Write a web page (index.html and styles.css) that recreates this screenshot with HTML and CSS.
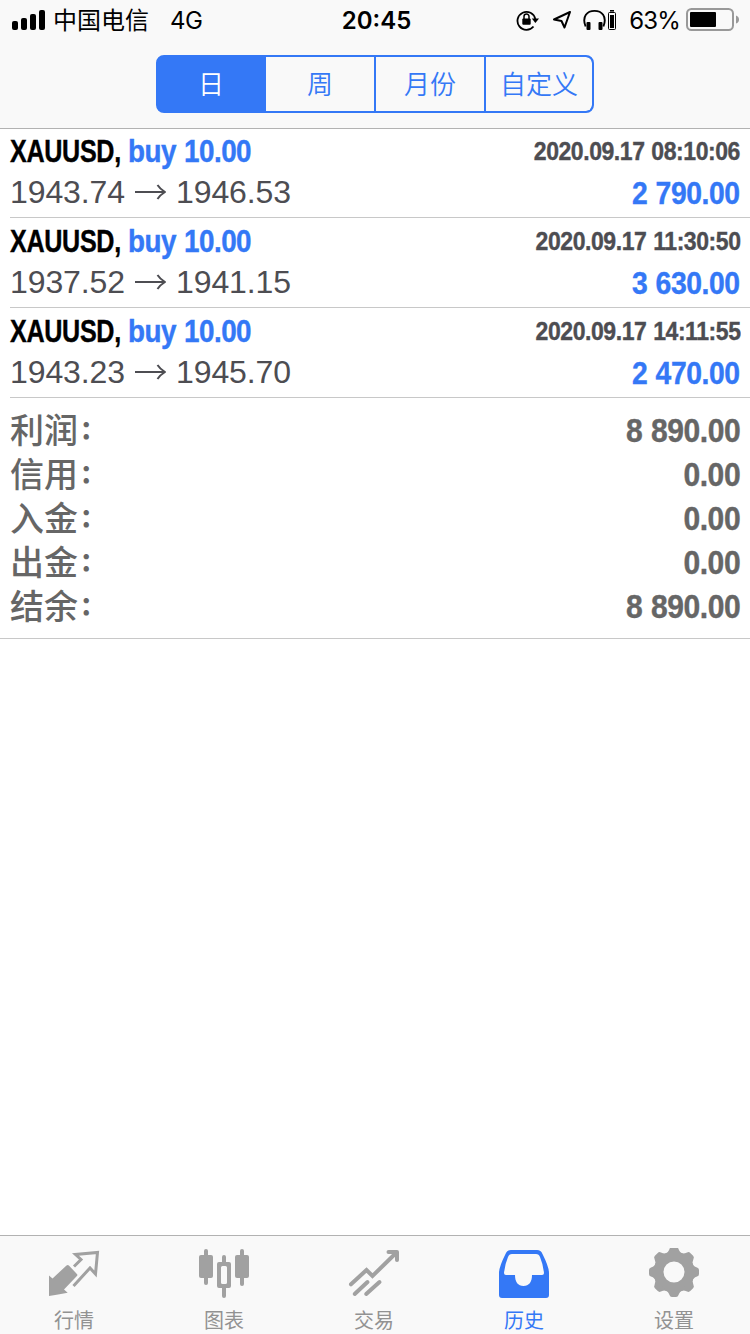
FILE: index.html
```html
<!DOCTYPE html>
<html lang="zh-CN">
<head>
    <meta charset="UTF-8">
    <meta name="viewport" content="width=device-width, initial-scale=1.0">
    <title>历史</title>
    <link rel="stylesheet" href="styles.css">
</head>
<body>
    <header>
        <div class="status-bar">
            <div class="status-left">
                <svg class="signal" width="34" height="20" viewBox="0 0 34 20">
                    <rect x="0" y="11" width="6" height="9" rx="2"/>
                    <rect x="9" y="8" width="6" height="12" rx="2"/>
                    <rect x="18" y="4" width="6" height="16" rx="2"/>
                    <rect x="27" y="0" width="6" height="20" rx="2"/>
                </svg>
                <span class="carrier">中国电信</span>
                <span class="network">4G</span>
            </div>
            <div class="clock">20:45</div>
            <div class="status-right">
                <svg class="lock" width="24" height="22" viewBox="0 0 24 22">
                    <path d="M17.500 17.500A9 9 0 1 1 19.300 10" fill="none" stroke="#000" stroke-width="1.8"/>
                    <path d="M15.800 9.500h7.200l-3.600 4.500z"/>
                    <rect x="6.300" y="9.500" width="8.400" height="6.300" rx="1"/>
                    <path d="M8 10V7.500a2.500 2.500 0 0 1 5 0V10" fill="none" stroke="#000" stroke-width="1.5"/>
                </svg>
                <svg class="location" width="20" height="20" viewBox="0 0 20 20">
                    <path d="M18 2L2 9.500l7.500 1.500 3 6.500z" fill="none" stroke="#000" stroke-width="2" stroke-linejoin="round"/>
                </svg>
                <svg class="headphones" width="34" height="22" viewBox="0 0 34 22">
                    <path d="M2.600 17.500C-1.500 7 4.500 1.900 11.500 1.900S24.500 7 20.400 17.500" fill="none" stroke="#000" stroke-width="1.9"/>
                    <rect x="3.500" y="13" width="4" height="8" rx="1"/>
                    <rect x="15.500" y="13" width="4" height="8" rx="1"/>
                    <rect x="25.500" y="3.500" width="7" height="17" rx="1" fill="none" stroke="#000"/>
                    <rect x="27" y="1" width="4" height="1.600"/>
                    <rect x="27" y="6" width="4" height="13"/>
                </svg>
                <span class="percent">63%</span>
                <svg class="battery" width="54" height="24" viewBox="0 0 54 24">
                    <rect x="1" y="1" width="46" height="21" rx="4.500" fill="none" stroke="#999" stroke-width="2"/>
                    <rect x="4" y="4" width="26" height="15" rx="1"/>
                    <path d="M50 7.500q3 1 3 4t-3 4z" fill="#999"/>
                </svg>
            </div>
        </div>
        <div class="segments">
            <button class="segment active">日</button>
            <button class="segment">周</button>
            <button class="segment">月份</button>
            <button class="segment">自定义</button>
        </div>
    </header>

    <main>
        <div class="deal">
            <div class="deal-line">
                <span class="symbol"><b class="name">XAUUSD,</b> <b class="side">buy 10.00</b></span>
                <span class="time">2020.09.17 08:10:06</span>
            </div>
            <div class="deal-line">
                <span class="price">1943.74<svg class="arrow" width="51" height="20" viewBox="0 0 51 20"><path d="M10 10h30M32.500 3q2.500 4 7.500 7q-5 3-7.500 7"/></svg>1946.53</span>
                <span class="profit">2 790.00</span>
            </div>
        </div>
        <div class="deal">
            <div class="deal-line">
                <span class="symbol"><b class="name">XAUUSD,</b> <b class="side">buy 10.00</b></span>
                <span class="time">2020.09.17 11:30:50</span>
            </div>
            <div class="deal-line">
                <span class="price">1937.52<svg class="arrow" width="51" height="20" viewBox="0 0 51 20"><path d="M10 10h30M32.500 3q2.500 4 7.500 7q-5 3-7.500 7"/></svg>1941.15</span>
                <span class="profit">3 630.00</span>
            </div>
        </div>
        <div class="deal">
            <div class="deal-line">
                <span class="symbol"><b class="name">XAUUSD,</b> <b class="side">buy 10.00</b></span>
                <span class="time">2020.09.17 14:11:55</span>
            </div>
            <div class="deal-line">
                <span class="price">1943.23<svg class="arrow" width="51" height="20" viewBox="0 0 51 20"><path d="M10 10h30M32.500 3q2.500 4 7.500 7q-5 3-7.500 7"/></svg>1945.70</span>
                <span class="profit">2 470.00</span>
            </div>
        </div>

        <div class="summary">
            <div class="total"><span class="label">利润<i>：</i></span><span class="value">8 890.00</span></div>
            <div class="total"><span class="label">信用<i>：</i></span><span class="value">0.00</span></div>
            <div class="total"><span class="label">入金<i>：</i></span><span class="value">0.00</span></div>
            <div class="total"><span class="label">出金<i>：</i></span><span class="value">0.00</span></div>
            <div class="total"><span class="label">结余<i>：</i></span><span class="value">8 890.00</span></div>
        </div>
    </main>

    <nav>
        <a class="tab">
            <svg width="52" height="52" viewBox="0 0 52 52">
                <path d="M1 26.500l3.500 3L18.500 16.500q1.200-1 2.400 0l8 8.500q1 1 0 2L16 40.500l3.700 3.200Q10 45.500 1 47z" fill="currentColor"/>
                <path d="M26 17.500l7-7-5.500-5L49.500 3.500 47.500 25l-5.500-6L25.500 37" fill="none" stroke="currentColor" stroke-width="3"/>
            </svg>
            <span>行情</span>
        </a>
        <a class="tab">
            <svg width="52" height="52" viewBox="0 0 52 52" fill="currentColor">
                <rect x="6" y="0" width="4" height="36" rx="2"/>
                <rect x="1" y="6" width="14" height="23" rx="2"/>
                <rect x="42" y="0" width="4" height="37" rx="2"/>
                <rect x="37" y="6" width="14" height="23" rx="2"/>
                <path d="M24 13V8a2 2 0 0 1 4 0v5h3a2 2 0 0 1 2 2v22a2 2 0 0 1-2 2h-3v8a2 2 0 0 1-4 0v-8h-3a2 2 0 0 1-2-2V15a2 2 0 0 1 2-2zM24.500 17a1.500 1.500 0 0 0-1.500 1.500v15a1.500 1.500 0 0 0 1.500 1.500h3a1.500 1.500 0 0 0 1.500-1.500v-15a1.500 1.500 0 0 0-1.500-1.500z" fill-rule="evenodd"/>
            </svg>
            <span>图表</span>
        </a>
        <a class="tab">
            <svg width="52" height="52" viewBox="0 0 52 52" fill="none" stroke="currentColor" stroke-width="4" stroke-linecap="round">
                <path d="M3 35.300L18.500 21l6 6L48 4"/>
                <path d="M40.500 3H49v8" stroke-linejoin="round"/>
                <path d="M6.700 45L19.500 33M18.200 45L31.500 33"/>
            </svg>
            <span>交易</span>
        </a>
        <a class="tab selected">
            <svg width="52" height="52" viewBox="0 0 52 52">
                <path d="M13 1h26q4 0 5.500 4Q51 18 51 24v22q0 3-3 3H4q-3 0-3-3V24Q1 18 7.500 5 9 1 13 1zM14 5q-3 0-4 3Q7 15 6 24q0 2 2 2h9c0 7 3 11 8.500 11S34 33 34 26h10q2 0 2-2-1-9-4-16-1-3-4-3z" fill="currentColor" fill-rule="evenodd"/>
            </svg>
            <span>历史</span>
        </a>
        <a class="tab">
            <svg class="gear" width="52" height="52" viewBox="0 0 52 52">
                <g transform="translate(26 24)" fill="currentColor">
                    <circle r="15.500" fill="none" stroke="currentColor" stroke-width="10"/>
                    <path id="tooth" d="M-9-18q3-1 4.500-5Q-4-25-2-25h4q2 0 2.500 2Q6-19 9-18z"/>
                    <use href="#tooth" transform="rotate(45)"/>
                    <use href="#tooth" transform="rotate(90)"/>
                    <use href="#tooth" transform="rotate(135)"/>
                    <use href="#tooth" transform="rotate(180)"/>
                    <use href="#tooth" transform="rotate(225)"/>
                    <use href="#tooth" transform="rotate(270)"/>
                    <use href="#tooth" transform="rotate(315)"/>
                </g>
            </svg>
            <span>设置</span>
        </a>
    </nav>
</body>
</html>
```
FILE: styles.css
```css
* {
    box-sizing: border-box;
}

body {
    display: flex;
    flex-direction: column;
    height: 1334px;
    margin: 0;
    font-family: "Liberation Sans", "Noto Sans CJK SC", sans-serif;
    background: #fff;
}

header {
    height: 129px;
    background: #f9f9f9;
    border-bottom: 1px solid #b2b2b2;
}

.status-bar {
    display: grid;
    grid-template-columns: 1fr auto 1fr;
    align-items: center;
    height: 40px;
    padding: 0 10px 0 12px;
    font-family: Inter, "Noto Sans CJK SC", sans-serif;
    font-size: 24px;
    line-height: 40px;
}

.status-left,
.status-right {
    display: flex;
    align-items: center;
}

.status-right {
    justify-content: flex-end;
}

.carrier,
.network,
.percent,
.clock {
    padding-top: 2px;
    line-height: 38px;
}

.carrier {
    margin-left: 7px;
}

.network {
    margin-left: 21px;
    letter-spacing: -0.4px;
}

.clock {
    padding-left: 1px;
    font-weight: 600;
}

.location {
    margin-left: 12px;
}

.headphones {
    margin-left: 11px;
}

.percent {
    margin: 0 6px 0 12px;
    letter-spacing: -0.8px;
}

.segments {
    display: grid;
    grid-template-columns: 108px 110px 110px 106px;
    width: 438px;
    height: 58px;
    margin: 15px auto 0;
    border: 2px solid #3478f6;
    border-radius: 8px;
    background: #3478f6;
    overflow: hidden;
}

.segment {
    padding: 0 0 3px;
    border: 0;
    border-right: 2px solid #3478f6;
    background: #f9f9f9;
    color: #3478f6;
    font-family: "Noto Sans CJK SC", sans-serif;
    font-size: 26px;
    font-weight: 350;
}

.segment:last-child {
    border-right: 0;
    border-radius: 0 6px 6px 0;
}

.segment.active {
    background: #3478f6;
    color: #fff;
}

main {
    flex: 1;
}

.deal {
    height: 89px;
    margin: 0 0 1px 10px;
    padding: 2px 10px 0 0;
    box-shadow: 0 1px 0 #c8c8c8;
}

.deal:first-child {
    height: 88px;
    padding-top: 1px;
}

.deal-line {
    display: flex;
    justify-content: space-between;
    height: 41px;
    line-height: 42px;
    white-space: nowrap;
}

.name,
.side,
.time,
.profit,
.value {
    font-weight: bold;
    -webkit-text-stroke: 0.4px currentColor;
}

.symbol {
    display: flex;
    font-size: 32px;
}

/* condensed bold figures */
.name {
    width: 118px;
    letter-spacing: -0.4px;
    transform: scaleX(0.785);
    transform-origin: left;
}

.side {
    letter-spacing: -0.6px;
    word-spacing: 1px;
    transform: scaleX(0.87);
    transform-origin: left;
}

.time,
.profit,
.value {
    letter-spacing: -0.5px;
    word-spacing: 1px;
    transform: scaleX(0.885);
    transform-origin: right;
}

.side,
.profit {
    color: #3478f6;
}

.time {
    color: #4d4d52;
    font-size: 26px;
}

.price {
    color: #4d4d52;
    font-size: 32px;
    letter-spacing: -0.1px;
}

.arrow {
    fill: none;
    stroke: #4d4d52;
    stroke-width: 2;
    stroke-linejoin: round;
    vertical-align: 1px;
}

.profit {
    padding-top: 1px;
    font-size: 32px;
}

.summary {
    height: 241px;
    padding: 10px 10px 0;
    border-bottom: 1px solid #c8c8c8;
}

.total {
    display: flex;
    justify-content: space-between;
    height: 44px;
    line-height: 44px;
    color: #666;
    font-size: 34px;
}

.label {
    margin-top: -1px;
    font-family: "Noto Sans CJK SC", sans-serif;
    font-weight: 500;
}

.label i {
    margin-left: 2px;
    font-size: 25px;
    font-style: normal;
    font-weight: 900;
    line-height: 1;
    vertical-align: 4px;
}

nav {
    display: flex;
    height: 99px;
    background: #f9f9f9;
    border-top: 1px solid #b2b2b2;
}

.tab {
    display: flex;
    flex: 0 0 150px;
    flex-direction: column;
    align-items: center;
    margin-left: -1px;
    margin-right: 1px;
    padding-top: 13px;
    color: #a1a1a1;
    font-family: "Noto Sans CJK SC", sans-serif;
    font-size: 20px;
    line-height: 28px;
}

.tab svg {
    flex-shrink: 0;
}

.tab .gear {
    margin: -1px 0 1px;
}

.tab span {
    margin-top: 5px;
    color: #929292;
}

.tab.selected,
.tab.selected span {
    color: #3478f6;
}
```
